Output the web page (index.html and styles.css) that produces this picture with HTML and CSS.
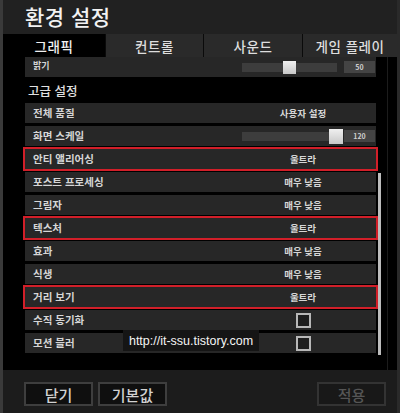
FILE: index.html
```html
<!DOCTYPE html>
<html lang="ko">
<head>
<meta charset="utf-8">
<link rel="stylesheet" href="styles.css">
</head>
<body>
<div class="window">
  <header class="titlebar"><h1>환경 설정</h1></header>
  <nav class="tabs">
    <div class="tab active">그래픽</div>
    <div class="tab">컨트롤</div>
    <div class="tab">사운드</div>
    <div class="tab">게임 플레이</div>
  </nav>
  <main class="panel">
    <div class="list">
      <div class="row slider-row top-row">
        <span class="label small">밝기</span>
        <div class="slider"><div class="knob knob-mid"></div></div>
        <div class="num">50</div>
      </div>
      <div class="section">고급 설정</div>
      <div class="rows">
        <div class="row"><span class="label">전체 품질</span><span class="value">사용자 설정</span></div>
        <div class="row slider-row"><span class="label">화면 스케일</span><div class="slider"><div class="knob knob-end"></div></div><div class="num">120</div></div>
        <div class="row marked"><span class="label">안티 앨리어싱</span><span class="value">울트라</span></div>
        <div class="row"><span class="label">포스트 프로세싱</span><span class="value">매우 낮음</span></div>
        <div class="row"><span class="label">그림자</span><span class="value">매우 낮음</span></div>
        <div class="row marked"><span class="label">텍스처</span><span class="value">울트라</span></div>
        <div class="row"><span class="label">효과</span><span class="value">매우 낮음</span></div>
        <div class="row"><span class="label">식생</span><span class="value">매우 낮음</span></div>
        <div class="row marked"><span class="label">거리 보기</span><span class="value">울트라</span></div>
        <div class="row"><span class="label">수직 동기화</span><span class="value"><span class="check"></span></span></div>
        <div class="row"><span class="label">모션 블러</span><span class="value"><span class="check"></span></span></div>
      </div>
    </div>
    <div class="scrolltrack"><div class="thumb"></div></div>
  </main>
  <footer class="footer">
    <button class="btn">닫기</button>
    <button class="btn">기본값</button>
    <button class="btn disabled">적용</button>
  </footer>
  <div class="watermark">http://it-ssu.tistory.com</div>
</div>
</body>
</html>
```

FILE: styles.css
```css
* { box-sizing: border-box; }
html, body { margin: 0; padding: 0; background: #0c0c0c; }
body {
  font-family: "Noto Sans CJK KR", "Noto Sans", sans-serif;
  color: #dcdcdc;
}
.window {
  position: relative;
  width: 400px;
  height: 413px;
  border-left: 3px solid #3a3a3a;
  border-right: 3px solid #2a2a2a;
  background: #000;
  display: flex;
  flex-direction: column;
  overflow: hidden;
}
.titlebar {
  height: 34px;
  background: #212121;
  padding-left: 22px;
  display: flex;
  align-items: center;
}
.titlebar h1 {
  margin: 0;
  font-size: 21px;
  font-weight: 500;
  color: #f2f2f2;
  letter-spacing: 0.5px;
  line-height: 1;
  margin-top: -2px;
}
.tabs {
  height: 23px;
  display: grid;
  grid-template-columns: 102px 98px 99px 1fr;
  background: #000;
}
.tab {
  background: #2a2a2a;
  border-left: 1px solid #0a0a0a;
  color: #dedede;
  font-size: 13.5px;
  font-weight: 500;
  display: flex;
  align-items: center;
  justify-content: center;
  letter-spacing: 0.5px;
}
.tab.active { background: #000; border-left: none; color: #f0f0f0; }
.panel {
  height: 313px;
  display: flex;
  background: #000;
  padding-left: 22px;
}
.list {
  width: 351px;
  display: flex;
  flex-direction: column;
}
.row {
  height: 20px;
  background: #272727;
  display: flex;
  align-items: center;
  padding-left: 8px;
  font-size: 10.5px;
  font-weight: 700;
  color: #d6d6d6;
}
.row.marked { outline: 2px solid #d21f29; }
.label { line-height: 1; }
.label.small { font-size: 9px; margin-top: -4px; }
.value {
  margin-left: auto;
  margin-right: 23px;
  width: 100px;
  text-align: center;
  font-size: 9.5px;
  display: flex;
  justify-content: center;
  align-items: center;
}
.check {
  width: 15px;
  height: 15px;
  border: 2px solid #b8b8b8;
  background: #1e1e1e;
}
.slider {
  margin-left: auto;
  width: 95px;
  height: 9px;
  background: #3d3d3d;
  position: relative;
}
.knob {
  position: absolute;
  top: -3px;
  width: 14px;
  height: 15px;
  background: linear-gradient(#f0f0f0, #c8c8c8);
}
.knob-mid { left: 41px; top: -2px; height: 13px; width: 13px; }
.knob-end { left: 87px; }
.num {
  width: 31px;
  height: 12px;
  margin-left: 7px;
  margin-right: 1px;
  background: #444;
  color: #cfcfcf;
  font-size: 7px;
  display: flex;
  align-items: center;
  justify-content: center;
}
.section {
  height: 26px;
  display: flex;
  align-items: center;
  padding-left: 3px;
  font-size: 12.5px;
  font-weight: 500;
  color: #e0e0e0;
}
.rows {
  display: flex;
  flex-direction: column;
  gap: 3px;
}
.scrolltrack {
  width: 10px;
  margin-left: 2px;
  position: relative;
  border-right: 1px solid #1c1c1c;
}
.thumb {
  position: absolute;
  left: 0;
  top: 116px;
  width: 3px;
  height: 182px;
  background: #bdbdbd;
}
.footer {
  flex: 1;
  background: #1c1c1c;
  display: flex;
  align-items: flex-start;
  padding: 12px 0 0 21px;
  gap: 5px;
}
.btn {
  width: 69px;
  height: 24px;
  background: #0f0f0f;
  border: 2px solid #3e3e3e;
  color: #d2d2d2;
  font-family: "Noto Sans CJK KR", sans-serif;
  font-size: 15px;
  font-weight: 500;
  padding: 0;
  display: flex;
  align-items: center;
  justify-content: center;
  line-height: 1;
}
.btn.disabled {
  margin-left: auto;
  margin-right: 11px;
  color: #555;
  border-color: #333;
  background: #181818;
}
.watermark {
  position: absolute;
  left: 120px;
  top: 330px;
  width: 136px;
  height: 21px;
  background: #151515;
  color: #f4f4f4;
  font-family: "Liberation Sans", Arial, sans-serif;
  font-size: 12.5px;
  display: flex;
  align-items: center;
  justify-content: center;
}
```
